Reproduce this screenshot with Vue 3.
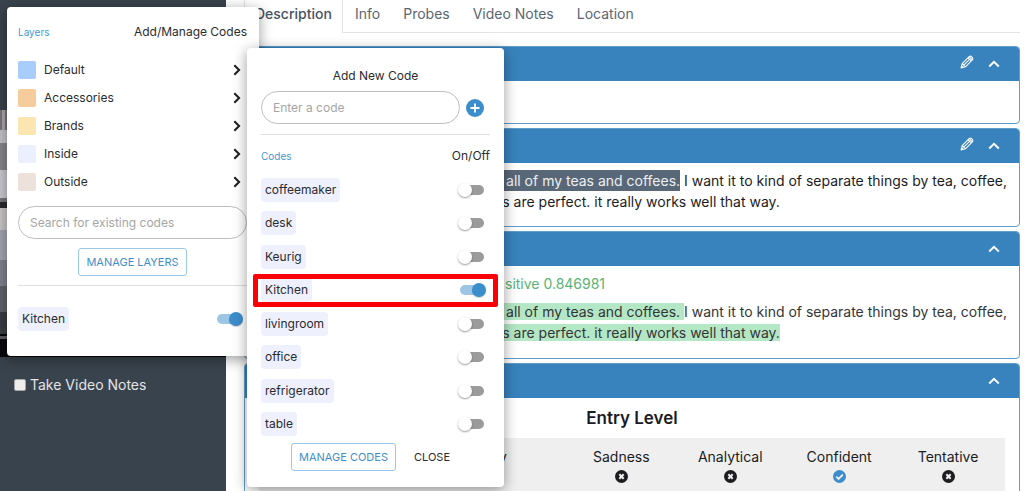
<script setup>
import { ref } from 'vue'

const tabs = ['Description', 'Info', 'Probes', 'Video Notes', 'Location']
const layers = [
  { name: 'Default', tone: 'blue' },
  { name: 'Accessories', tone: 'orange' },
  { name: 'Brands', tone: 'yellow' },
  { name: 'Inside', tone: 'lavender' },
  { name: 'Outside', tone: 'beige' },
]
const codes = ref([
  { name: 'coffeemaker', on: false },
  { name: 'desk', on: false },
  { name: 'Keurig', on: false },
  { name: 'Kitchen', on: true },
  { name: 'livingroom', on: false },
  { name: 'office', on: false },
  { name: 'refrigerator', on: false },
  { name: 'table', on: false },
])
const tones = [
  { name: 'Joy', on: false },
  { name: 'Sadness', on: false },
  { name: 'Analytical', on: false },
  { name: 'Confident', on: true },
  { name: 'Tentative', on: false },
]
const layerKitchen = ref(true)
const takeNotes = ref(false)
</script>

<template>
  <div class="page">
    <aside class="side">
      <div class="video">
        <svg class="still" viewBox="0 0 226 247" preserveAspectRatio="none" aria-hidden="true">
          <rect width="226" height="247" fill="#08080a" />
          <rect width="226" height="20" fill="#77757a" />
          <rect x="2" width="3" height="20" fill="#aaa8ac" />
          <rect y="20" width="226" height="13" fill="#c4c3c8" />
          <rect y="33" width="226" height="27" fill="#88868c" />
          <rect y="60" width="226" height="28" fill="#c9c9d0" />
          <rect y="88" width="226" height="4" fill="#77767c" />
          <rect y="92" width="226" height="6" fill="#2a2a2e" />
          <rect y="98" width="226" height="22" fill="#c8c6c6" />
          <rect y="120" width="226" height="30" fill="#a3a5b2" />
          <rect y="150" width="226" height="26" fill="#7f828f" />
          <rect y="176" width="226" height="26" fill="#60626c" />
          <rect y="202" width="226" height="22" fill="#3c3d43" />
          <rect y="226" width="226" height="3" fill="#5d5e63" />
        </svg>
      </div>
      <label class="notes"><input v-model="takeNotes" type="checkbox" />Take Video Notes</label>
    </aside>

    <main class="main">
      <nav class="tabs">
        <a v-for="(t, i) in tabs" :key="t" href="#" class="tab" :class="{ active: i === 0 }">{{ t }}</a>
      </nav>

      <section v-for="n in 4" :key="n" class="card">
        <header class="bar">
          <button v-if="n < 3" class="icon" aria-label="Edit">
            <svg class="pencil" width="14" height="14" viewBox="0 0 16 16" fill="none" stroke="#fff" stroke-width="1.2" stroke-linejoin="round">
              <path d="M1.2 14.8 2.5 9.8 10.4 1.9Q11.9.6 13.7 2.3 15.4 4.1 14.1 5.6L6.2 13.5ZM9.2 3.1l3.7 3.7M10.5 1.9l3.6 3.7M2.5 9.8l3.7 3.7M4.3 11.6l6.6-6.6M1.9 12.4 3.6 14.1" />
            </svg>
          </button>
          <button class="icon" aria-label="Collapse">
            <svg width="12" height="8" viewBox="0 0 12 8" fill="none" stroke="#fff" stroke-width="2"><path d="m1.2 6.5 4.8-4.7 4.8 4.7" /></svg>
          </button>
        </header>
        <div v-if="n === 1" class="empty"></div>
        <div v-else-if="n === 2" class="body">
          <p class="line end"><mark class="picked">to all of my teas and coffees.</mark> I want it to kind of separate things by tea, coffee,</p>
          <p class="line rest">rs are perfect. it really works well that way.</p>
        </div>
        <div v-else-if="n === 3" class="body mood">
          <p class="score">sitive 0.846981</p>
          <p class="line end"><mark class="good">to all of my teas and coffees.&nbsp;</mark>I want it to kind of separate things by tea, coffee,</p>
          <p class="line rest"><mark class="good">rs are perfect. it really works well that way.</mark></p>
        </div>
        <div v-else class="levels">
          <h2>Entry Level</h2>
          <table>
            <tbody>
              <tr>
                <td class="lead"></td>
                <td v-for="t in tones" :key="t.name">
                  <span>{{ t.name }}</span>
                  <svg width="13" height="13" viewBox="0 0 12 12">
                    <circle cx="6" cy="6" r="6" :fill="t.on ? '#3c8dcb' : '#1d1d1f'" />
                    <path v-if="t.on" d="m3 6.2 2.1 2.1 4-4" fill="none" stroke="#efefef" stroke-width="1.7" />
                    <path v-else d="m4 4 4 4m0-4L4 8" stroke="#efefef" stroke-width="1.9" />
                  </svg>
                </td>
              </tr>
            </tbody>
          </table>
        </div>
      </section>
    </main>

    <div class="popup layers">
      <div class="row head"><span class="cap">Layers</span><span>Add/Manage Codes</span></div>
      <ul>
        <li v-for="l in layers" :key="l.name">
          <i class="swatch" :class="l.tone"></i>
          <span>{{ l.name }}</span>
          <button class="icon go" :aria-label="'Open ' + l.name">
            <svg width="8" height="12" viewBox="0 0 8 12" fill="none" stroke="#1f1f22" stroke-width="2"><path d="m1.3 1.2 4.8 4.8-4.8 4.8" /></svg>
          </button>
        </li>
      </ul>
      <input class="field" type="text" aria-label="Search for existing codes" placeholder="Search for existing codes" />
      <button class="outline">MANAGE LAYERS</button>
      <hr />
      <label class="row code"><span class="chip">Kitchen</span><input v-model="layerKitchen" class="switch" type="checkbox" /></label>
    </div>

    <div class="popup codes">
      <div class="title">Add New Code</div>
      <div class="row add">
        <input class="field" type="text" aria-label="Enter a code" placeholder="Enter a code" />
        <button class="icon" aria-label="Add code">
          <svg width="18" height="18" viewBox="0 0 18 18"><circle cx="9" cy="9" r="9" fill="#3c8dcb" /><path d="M9 4.5v9M4.5 9h9" stroke="#fff" stroke-width="1.8" /></svg>
        </button>
      </div>
      <hr />
      <div class="row sub"><span class="cap">Codes</span><span>On/Off</span></div>
      <div class="list">
        <label v-for="c in codes" :key="c.name" class="row code" :class="{ marked: c.name === 'Kitchen' }">
          <span class="chip">{{ c.name }}</span><input v-model="c.on" class="switch" type="checkbox" />
        </label>
      </div>
      <div class="actions">
        <button class="outline">MANAGE CODES</button>
        <button class="plain">CLOSE</button>
      </div>
    </div>
  </div>
</template>

<style>
body { overflow: hidden; }
</style>

<style scoped>
* { box-sizing: border-box; }
.page {
  position: relative;
  display: flex;
  height: 100vh;
  overflow: hidden;
  background: #fff;
  color: #2a2b2e;
  font: 12px/20px Inter, "Liberation Sans", sans-serif;
}
p, ul, h2 { margin: 0; padding: 0; }
button, input { font: inherit; color: inherit; }
button { cursor: pointer; }
.side { flex: none; width: 226px; background: #39434d; color: #e2e4e6; }
.video { padding-top: 110px; }
.still { display: block; width: 100%; height: 247px; }
.notes { display: flex; align-items: center; gap: 4px; padding: 18px 14px; font-size: 14px; }
.notes input { appearance: none; width: 12px; height: 12px; margin: 0; border: 1px solid #a5a7a9; border-radius: 2px; background: #f0eeec; }
.main { flex: 1; min-width: 0; padding: 0 4px 0 18px; background: #fff; font-size: 14px; line-height: 21px; }
.tabs { display: flex; height: 33px; margin-bottom: 13px; border-bottom: 1px solid #e3e4e6; }
.tab { padding: 3px 11px 0 12px; color: #5a6672; text-decoration: none; }
.tab.active { height: 33px; width: 99px; padding: 3px 0 0 10px; border: solid #e3e4e6; border-width: 0 1px; background: #fff; color: #46525f; font-weight: 500; }
.card { margin-bottom: 4px; overflow: hidden; border: 1px solid #5f9dcb; border-radius: 4px; background: #fff; color: #1b1c1f; }
.bar { display: flex; justify-content: flex-end; align-items: center; gap: 14px; height: 34px; padding-right: 19px; background: #3883bd; }
.icon { display: flex; align-items: center; padding: 0; border: 0; background: none; }
.pencil { margin-bottom: 4px; }
.empty { height: 42px; }
.body { height: 63px; padding: 7px 12px; }
.line { white-space: nowrap; }
.end { text-align: right; }
.rest { padding-left: 240px; }
mark { color: inherit; }
.picked { padding: 2px 0; background: #596878; color: #edf0f2; }
.good { background: #b4e7c5; }
.mood { height: 92px; color: #333537; }
.score { margin-bottom: 7px; padding-left: 248px; color: #5bb274; }
.levels { padding: 9px 14px; }
h2 { margin-bottom: 8px; font-size: 17px; line-height: 23px; font-weight: 600; text-align: center; }
table { width: 100%; table-layout: fixed; border-collapse: collapse; background: #efefef; }
td { width: 14.6%; height: 64px; padding: 8px 5px 0 0; text-align: center; vertical-align: top; }
.lead { width: auto; }
.lead + td { padding-right: 40px; }
td span, td svg { display: block; margin: 0 auto; }
td svg { margin-top: 3px; }
.popup { position: absolute; border-radius: 4px; background: #fff; box-shadow: 0 3px 14px rgba(0, 0, 0, 0.4); }
.layers { left: 7px; top: 7px; width: 252px; padding: 15px 12px 24px 11px; }
.codes { left: 247px; top: 48px; width: 257px; padding: 18px 14px 16px; }
.row { display: flex; align-items: center; justify-content: space-between; }
.cap { color: #4797d2; font-size: 10px; }
.head { margin-bottom: 14px; }
ul { list-style: none; }
li { display: flex; align-items: center; gap: 8px; height: 28px; padding-right: 6px; }
.go { margin-left: auto; }
.swatch { width: 18px; height: 18px; border-radius: 2px; }
.blue { background: #a9cdfb; }
.orange { background: #f6cc9d; }
.yellow { background: #fbe5b0; }
.lavender { background: #eceffe; }
.beige { background: #ede2db; }
.field { display: block; width: 100%; height: 33px; padding: 0 11px; border: 1px solid #bdbdbd; border-radius: 17px; background: #fff; outline: 0; }
.field::placeholder { color: #a5a5a5; opacity: 1; }
.layers .field { margin-top: 10px; width: 229px; }
.outline { display: block; height: 28px; padding: 0 7px; border: 1px solid #9ac8e9; border-radius: 3px; background: #fff; color: #3f8fca; font-size: 11px; }
.layers .outline { margin: 9px auto 0; }
hr { height: 1px; margin: 9px 0; border: 0; background: #dedede; }
.layers hr { margin: 9px 0 20px; }
.code { height: 26px; }
.chip { padding: 2px 4px; border-radius: 4px; background: #eef0fe; }
.switch { position: relative; appearance: none; width: 24px; height: 14px; margin: 0 6px 0 0; }
.switch::before { content: ""; position: absolute; left: 0; top: 2px; width: 24px; height: 10px; border-radius: 5px; background: #9b9b9b; }
.switch::after { content: ""; position: absolute; left: -2px; top: 0; width: 14px; height: 14px; border-radius: 50%; background: #fff; box-shadow: 0 1px 2px rgba(0, 0, 0, 0.4); }
.switch:checked::before { background: #9dc6e5; }
.switch:checked::after { left: 12px; background: #3c8dcb; box-shadow: 0 1px 1px rgba(0, 0, 0, 0.2); }
.title { text-align: center; }
.add { gap: 6px; margin-top: 5px; padding-right: 6px; }
.codes hr { margin: 10px 0 11px; }
.sub { margin-bottom: 7px; }
.list { display: flex; flex-direction: column; height: 268px; }
.list .code { position: relative; flex: 1; }
.marked::after { content: ""; position: absolute; inset: 0 -8px; border: 5px solid #fb0007; border-radius: 2px; }
.actions { display: flex; align-items: center; justify-content: center; gap: 18px; margin-top: 2px; padding-right: 10px; }
.plain { padding: 0; border: 0; background: none; font-size: 11px; }
</style>
